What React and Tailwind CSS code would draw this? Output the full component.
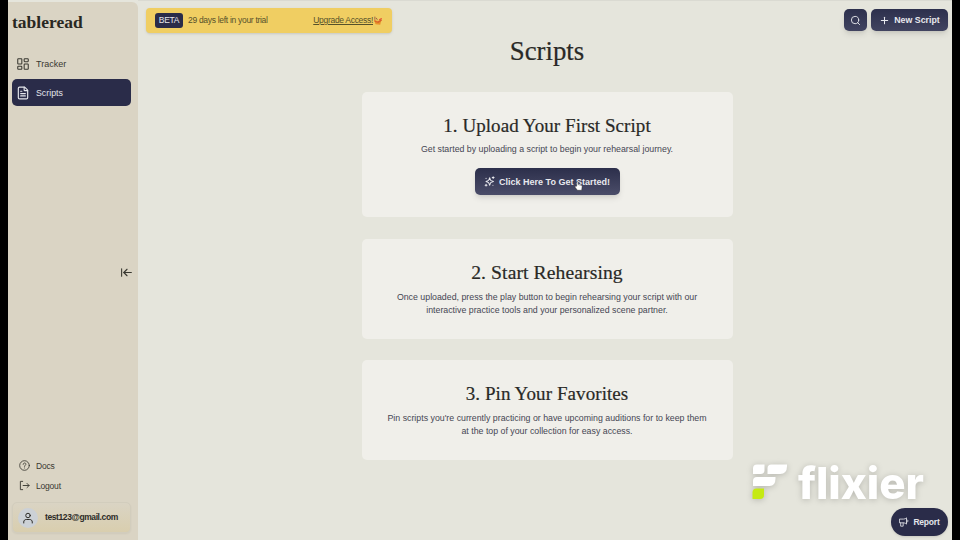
import { LayoutDashboard, FileText, ArrowLeftToLine, Search, Plus } from "lucide-react";

const stroke = {
  viewBox: "0 0 24 24",
  fill: "none",
  stroke: "currentColor",
  strokeLinecap: "round",
  strokeLinejoin: "round",
};

function SparklesIcon({ className }) {
  return (
    <svg {...stroke} strokeWidth="2.200" className={className}>
      <path d="M12.500 4 14.500 9.500 20.500 12 14.500 14.500 12.500 20 10 14.500 4.500 12 10 9.500z" />
      <path d="M20 1.500v4M18 3.500h4M4.500 18v4M2.500 20h4M4.500 5v.2M19.500 20v.2" />
    </svg>
  );
}

function MegaphoneIcon({ className }) {
  return (
    <svg {...stroke} strokeWidth="2" className={className}>
      <path d="M2 5h9c3 0 5-1 7-3v15c-2-2-4-3-7-3H2z" />
      <path d="M18 6.500c5 0 5 6 0 6M4 14v8h6v-8" />
    </svg>
  );
}

function HelpIcon({ className }) {
  return (
    <svg {...stroke} strokeWidth="1.8" className={className}>
      <circle cx="12" cy="12" r="10.500" />
      <path d="M9 9.500c0-4 6-4 6-.5 0 2.500-3 2.500-3 5M12 17.300v.2" />
    </svg>
  );
}

function LogoutIcon({ className }) {
  return (
    <svg {...stroke} strokeWidth="2" className={className}>
      <path d="M8 3H3v18h5M9 12h13M17.500 7.500 22 12l-4.500 4.500" />
    </svg>
  );
}

function UserIcon({ className }) {
  return (
    <svg {...stroke} strokeWidth="2" className={className}>
      <circle cx="12" cy="7" r="4.500" />
      <path d="M3.500 22v-2c0-3 2-5 5-5h7c3 0 5 2 5 5v2" />
    </svg>
  );
}

function GiftIcon({ className }) {
  return (
    <svg viewBox="0 0 16 16" className={className}>
      <path d="M2 7l11 1-1.500 6L4 13z" fill="#e8912a" />
      <path d="M2 6l5 3 6-4 1.500 2-6 4-6-2z" fill="#d9622b" />
      <path d="M3 1v5M5 3l2 3" stroke="#9a5a43" strokeWidth="1.500" />
      <path d="M10 6l4-2" stroke="#e4452f" strokeWidth="2" />
    </svg>
  );
}

function HandCursor({ className }) {
  return (
    <svg viewBox="0 0 12 14" className={className}>
      <path
        d="M3.500 7V2a1 1 0 0 1 2 0v3l4.500 1c1 .2 1.300 1 1.100 2L10.500 13h-6L1 8.500c-.4-1 .8-1.600 1.500-.8z"
        fill="#fff"
        stroke="#333"
        strokeWidth=".7"
      />
    </svg>
  );
}

function FlixierLogo({ className }) {
  return (
    <svg viewBox="0 0 190 60" className={className}>
      <g fill="#fff">
        <path d="M12 9.500h7.500v5.500q0 4-4 4H8V13.500q0-4 4-4z" />
        <path d="M26.500 9.500H42v1.500q0 8-7 8H22.500V13.500q0-4 4-4z" />
        <path d="M12 22h18.500v1.500q0 7.500-6 7.500H8v-5q0-4 4-4z" />
      </g>
      <path d="M11.500 33.500H19v6.500q0 4-4 4H7.500v-6.500q0-4 4-4z" fill="#c5ea12" />
      <text
        x="53"
        y="44"
        textLength="126"
        lengthAdjust="spacingAndGlyphs"
        fill="#fff"
        className="font-['Inter',sans-serif] text-[44px] font-extrabold"
      >
        flixier
      </text>
    </svg>
  );
}

function StepCard({ title, titleClass = "", lines, linesClass, className, children }) {
  return (
    <section
      className={`flex w-[371px] flex-col items-center rounded-[5px] bg-[#f0efea] text-center ${className}`}
    >
      <h2
        className={`mt-[22px] font-['Liberation_Serif',serif] leading-6 text-[#292926] [-webkit-text-stroke:0.2px] ${titleClass}`}
      >
        {title}
      </h2>
      <div className={`text-[8.800px] leading-[13px] text-[#454653] ${linesClass}`}>
        {lines.map((line) => (
          <p key={line} className="whitespace-nowrap">{line}</p>
        ))}
      </div>
      {children}
    </section>
  );
}

export default function App() {
  return (
    <div className="flex h-[540px] w-[960px] overflow-hidden bg-black px-2 font-['Liberation_Sans',sans-serif]">
      <div className="flex flex-1 bg-[#e5e5dc]">
        <aside className="mt-0.5 flex w-[130px] flex-col rounded-tr-md bg-[#dad4c4] pl-1 text-[#393831]">
          <h1 className="mt-[10px] font-['Liberation_Serif',serif] text-[17.500px] leading-5 font-bold text-[#292822]">
            tableread
          </h1>
          <nav className="mt-[19px] flex w-[119px] flex-col gap-0.5 text-[9px]">
            <a className="flex h-[26px] items-center gap-1.5 pl-1">
              <LayoutDashboard className="size-[14px]" strokeWidth={1.8} />
              <span className="pt-0.5">Tracker</span>
            </a>
            <a className="flex h-[27px] items-center gap-1.5 rounded-[5px] bg-[#2a2c49] pl-1 text-[#e4e6eb]">
              <FileText className="size-[14px]" strokeWidth={2} />
              <span className="pt-0.5 text-[8.800px]">Scripts</span>
            </a>
          </nav>
          <ArrowLeftToLine className="mt-[160px] mr-[5px] size-[13px] self-end" strokeWidth={2} />
          <div className="mt-auto flex flex-col text-[8.500px] tracking-[-0.2px]">
            <a className="flex h-5 items-center gap-[6px] pl-[7px]">
              <HelpIcon className="size-[11px]" />
              <span className="pt-0.5">Docs</span>
            </a>
            <a className="flex h-5 items-center gap-[6px] pl-[7px]">
              <LogoutIcon className="size-[11px]" />
              <span className="pt-0.5">Logout</span>
            </a>
          </div>
          <div className="mt-[7px] mb-[7px] flex h-[31px] w-[119px] items-center gap-[7px] rounded-[5px] border border-[#d2cdbd] bg-linear-to-b from-[#dad4c4] to-[#d9ceae] pl-[5px] font-bold text-[#2d2c28] shadow-xs">
            <span className="flex size-5 items-center justify-center rounded-full bg-[#ccd1d6]">
              <UserIcon className="size-3" />
            </span>
            <span className="text-[8.500px] tracking-[-0.4px]">test123@gmail.com</span>
          </div>
        </aside>
        <main className="relative flex flex-1 flex-col border-t border-[#dadad2]">
          <header className="flex h-[33px] items-start justify-between pt-[7px] pr-1 pl-2">
            <div className="flex h-[25px] w-[246px] items-center rounded-[4px] bg-[#f0ce62] px-[9px] text-[8.500px] tracking-[-0.3px] text-[#56512b] shadow-sm">
              <span className="mr-[5px] flex h-[15px] w-7 items-center justify-center rounded-[3px] bg-[#2a2c49] text-[8.500px] text-[#e4e6eb]">
                BETA
              </span>
              29 days left in your trial
              <a className="ml-auto flex items-center whitespace-nowrap underline">
                Upgrade Access!
                <GiftIcon className="size-2.5" />
              </a>
            </div>
            <div className="mt-px flex gap-1 text-[#e8e9ee]">
              <button className="flex h-[22px] w-[23px] items-center justify-center rounded-[5px] bg-linear-to-b from-[#2d304d] to-[#414460] shadow-md">
                <Search className="size-[11px]" strokeWidth={2} />
              </button>
              <button className="flex h-[22px] w-[77px] items-center justify-center gap-1 rounded-[5px] bg-linear-to-b from-[#2d304d] to-[#414460] text-[8.800px] font-bold whitespace-nowrap shadow-md">
                <Plus className="size-[11px]" strokeWidth={2.200} />
                <span className="pt-0.5">New Script</span>
              </button>
            </div>
          </header>
          <div className="flex flex-col items-center pl-1">
            <h1 className="mt-[1px] h-8 font-['Liberation_Serif',serif] text-[26.800px] leading-8 text-[#292926] [-webkit-text-stroke:0.2px]">
              Scripts
            </h1>
            <StepCard
              className="mt-[25px] h-[125px]"
              title="1. Upload Your First Script"
              titleClass="text-[19px] tracking-[0.06px]"
              linesClass="mt-[5px]"
              lines={["Get started by uploading a script to begin your rehearsal journey."]}
            >
              <button className="relative mt-3 flex h-[27px] w-[145px] items-center justify-center gap-1 rounded-[5px] bg-linear-to-b from-[#2c2f4b] to-[#4b4d69] text-[9px] font-bold whitespace-nowrap text-[#e8e9ee] shadow-md">
                <SparklesIcon className="size-[11px]" />
                <span className="pt-0.5">Click Here To Get Started!</span>
                <HandCursor className="absolute top-[13px] left-[99px] h-[10px] w-[9px]" />
              </button>
            </StepCard>
            <StepCard
              className="mt-[22px] h-[100px]"
              title="2. Start Rehearsing"
              titleClass="text-[19.600px] tracking-[0.1px]"
              linesClass="mt-1.5"
              lines={[
                "Once uploaded, press the play button to begin rehearsing your script with our",
                "interactive practice tools and your personalized scene partner.",
              ]}
            />
            <StepCard
              className="mt-[21px] h-[100px]"
              title="3. Pin Your Favorites"
              titleClass="text-[19px] tracking-[0.08px]"
              linesClass="mt-1.5"
              lines={[
                "Pin scripts you're currently practicing or have upcoming auditions for to keep them",
                "at the top of your collection for easy access.",
              ]}
            />
          </div>
          <FlixierLogo className="absolute top-[454px] left-[607px] h-[60px] w-[190px] overflow-visible drop-shadow-[0_1px_3px_rgba(0,0,0,0.2)]" />
          <button className="absolute top-[507px] left-[753px] flex h-[28px] w-[57px] items-center justify-center gap-1 rounded-full bg-[#2a2c49] text-[8.500px] font-bold tracking-[-0.2px] text-[#e4e6eb] shadow-sm">
            <MegaphoneIcon className="size-[10px]" />
            <span>Report</span>
          </button>
        </main>
      </div>
    </div>
  );
}
